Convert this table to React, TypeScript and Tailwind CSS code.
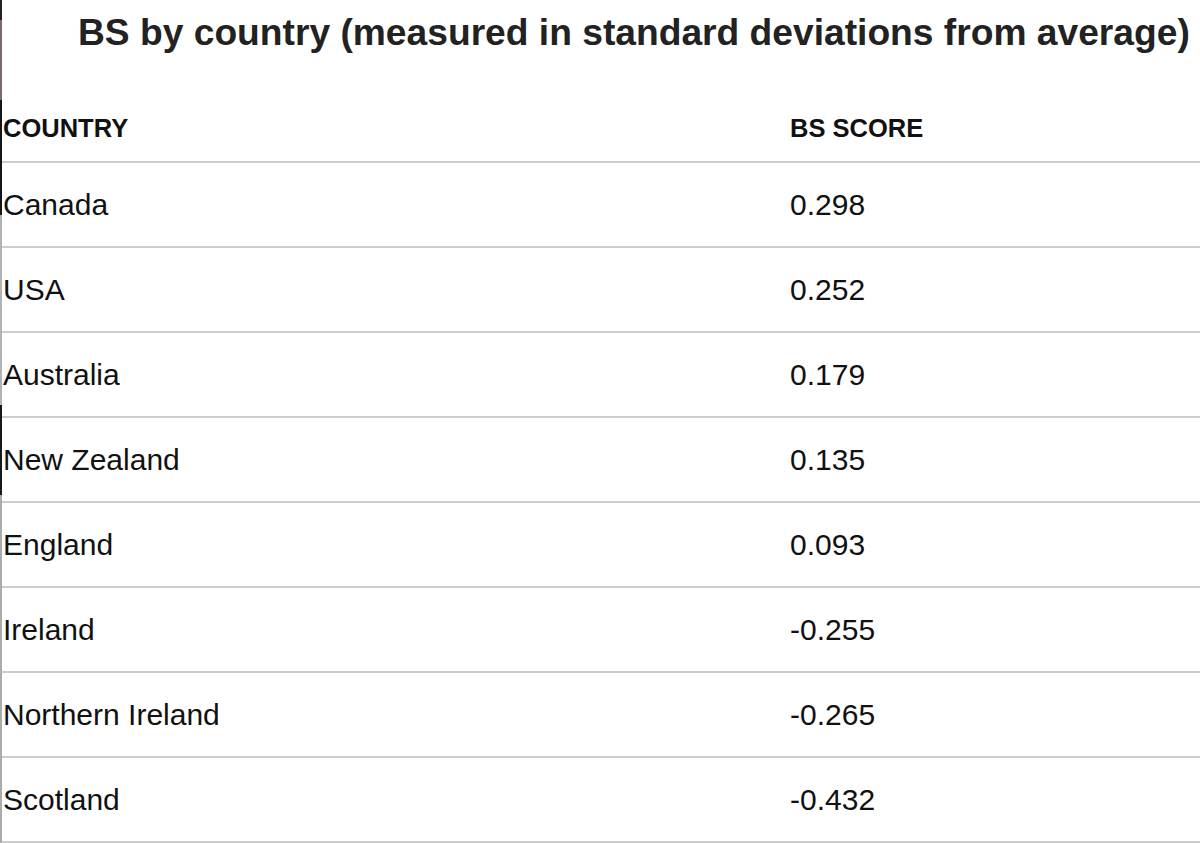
const rows = [
  { country: 'Canada', score: '0.298' },
  { country: 'USA', score: '0.252' },
  { country: 'Australia', score: '0.179' },
  { country: 'New Zealand', score: '0.135' },
  { country: 'England', score: '0.093' },
  { country: 'Ireland', score: '-0.255' },
  { country: 'Northern Ireland', score: '-0.265' },
  { country: 'Scotland', score: '-0.432' },
];

export default function App() {
  return (
    <div className="flex h-[843px] w-[1200px] overflow-hidden bg-white font-['Liberation_Sans',Arial,sans-serif]">
      {/* cropped edge of the screenshot */}
      <div className="flex w-[2px] shrink-0 flex-col">
        <div className="h-[20px] bg-[#222]" />
        <div className="h-[80px] bg-[#7d666c]" />
        <div className="h-[115px] bg-[#151515]" />
        <div className="h-[190px] bg-[#b3b3b3]" />
        <div className="h-[90px] bg-[#181818]" />
        <div className="flex-1 bg-[#ababab]" />
      </div>

      <div className="flex flex-1 flex-col">
        <h1 className="flex h-[90px] items-start whitespace-nowrap pl-[76px] pt-[10px] text-[37.2px] font-bold leading-[44px] text-[#222]">
          BS by country (measured in standard deviations from average)
        </h1>

        <div className="flex h-[71px] items-center pl-[1px] pt-[5px] text-[25.5px] font-bold text-[#111]">
          <div className="w-[787px]">COUNTRY</div>
          <div>BS SCORE</div>
        </div>

        {rows.map((row) => (
          <div
            key={row.country}
            className="flex h-[85px] items-center border-t-2 border-[#cdcdcd] pl-[1px] text-[30px] text-[#111]"
          >
            <div className="w-[787px]">{row.country}</div>
            <div>{row.score}</div>
          </div>
        ))}
        <div className="border-t-2 border-[#cdcdcd]" />
      </div>
    </div>
  );
}
